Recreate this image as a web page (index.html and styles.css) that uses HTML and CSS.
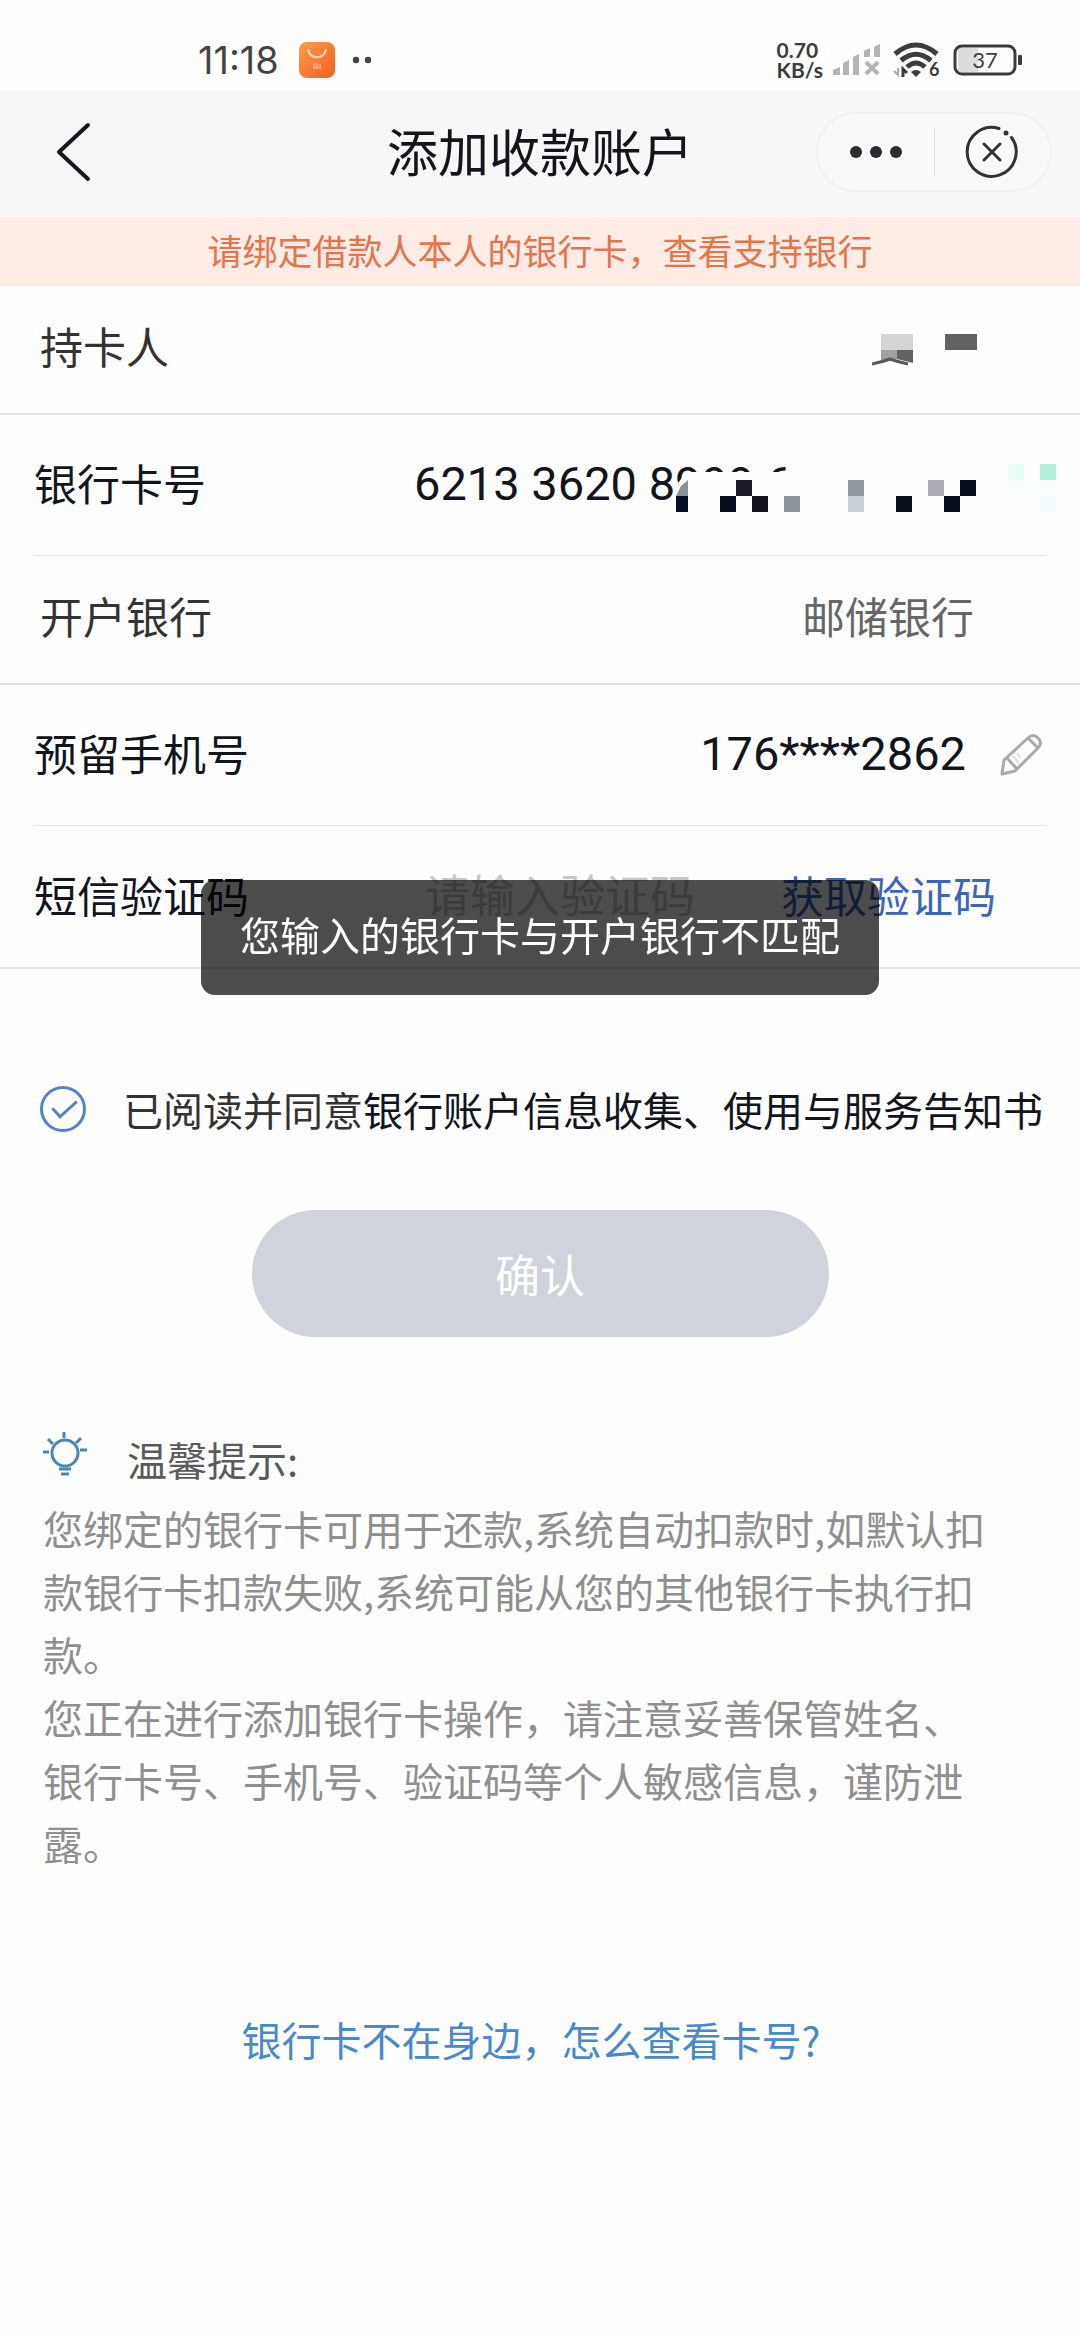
FILE: index.html
```
<!DOCTYPE html>
<html lang="zh-CN">
<head>
  <meta charset="UTF-8" />
  <meta name="viewport" content="width=device-width, initial-scale=1" />
  <title>添加收款账户</title>
  <link rel="stylesheet" href="styles.css">
</head>
<body>
  <div class="status-bar">
    <span class="clock">11:18</span>
    <svg class="app-icon" width="36" height="36" viewBox="0 0 36 36">
      <defs>
        <linearGradient id="mi" x1="0" y1="0" x2="1" y2="1">
          <stop offset="0" stop-color="#f6a04a" />
          <stop offset="1" stop-color="#fb5a22" />
        </linearGradient>
      </defs>
      <rect width="36" height="36" rx="8" fill="url(#mi)" />
      <path d="M9 7c1 11 17 11 18 0" fill="none" stroke="#ffe3b8" stroke-width="2" />
      <path d="M15 27v-5h3.500v5M16.800 24v3M21 22v5" fill="none" stroke="#ffc9a0" stroke-width="1.200" />
    </svg>
    <svg class="more-dots" width="20" height="8" viewBox="0 0 20 8" fill="#444">
      <circle cx="4" cy="4" r="3.200" />
      <circle cx="16" cy="4" r="3.200" />
    </svg>
    <div class="net-speed"><span>0.70</span><span>KB/s</span></div>
    <svg class="signal" width="48" height="32" viewBox="0 0 48 32" fill="#b4b4b4">
      <path d="M0 31v-4q0-2 2-2l5-2v8zM10 31V20q0-2 2-2l4-2v15zM20 31V14q0-2 2-2l4-2v21zM31 13V8q0-2 2-2l4-2v9zM41 13V4q0-2 2-2l4-2v13z" />
      <path d="M33 18l12 12M45 18L33 30" stroke="#b4b4b4" stroke-width="4" />
    </svg>
    <svg class="wifi" width="48" height="38" viewBox="0 0 48 38">
      <g fill="none" stroke="#3c3c3c" stroke-width="5">
        <path d="M2 13Q23 -5 44 13" />
        <path d="M8 19.500Q23 7 38 19.500" />
        <path d="M14 26Q23 18 32 26" />
      </g>
      <path d="M18 31q5-4 10 0l-5 5z" fill="#3c3c3c" />
      <path d="M5 27v7l-4-4" fill="none" stroke="#aaa" stroke-width="2" />
      <path d="M10 36v-8l4 4" fill="none" stroke="#3c3c3c" stroke-width="3" />
      <text x="36" y="35" class="wifi-gen">6</text>
    </svg>
    <svg class="battery" width="70" height="32" viewBox="0 0 70 32">
      <rect x="5" y="4" width="20" height="24" fill="#dcdcdc" />
      <rect x="2" y="2" width="60" height="28" rx="7" fill="none" stroke="#3c3c3c" stroke-width="3" />
      <rect x="65" y="11" width="4" height="10" rx="1" fill="#3c3c3c" />
      <text x="32" y="24" class="battery-level">37</text>
    </svg>
  </div>

  <header class="header">
    <button class="back" type="button" aria-label="返回">
      <svg width="36" height="60" viewBox="0 0 36 60">
        <path d="M33 3L4 30l29 27" fill="none" stroke="#15171f" stroke-width="4" stroke-linecap="round" stroke-linejoin="round" />
      </svg>
    </button>
    <h1>添加收款账户</h1>
    <div class="capsule">
      <button type="button" aria-label="更多">
        <svg width="54" height="14" viewBox="0 0 54 14" fill="#2c2c30">
          <circle cx="7" cy="7" r="6" />
          <circle cx="27" cy="7" r="6" />
          <circle cx="47" cy="7" r="6" />
        </svg>
      </button>
      <button type="button" aria-label="关闭">
        <svg width="54" height="54" viewBox="0 0 54 54" fill="none" stroke="#333" stroke-width="3" stroke-linecap="round">
          <path d="M34 3.500A24.500 24.500 0 1 0 46.500 12.500" />
          <path d="M19 19l16 16M35 19L19 35" />
          <circle cx="41" cy="8" r="2.500" fill="#333" stroke="none" />
        </svg>
      </button>
    </div>
  </header>

  <div class="notice">请绑定借款人本人的银行卡，查看支持银行</div>

  <form class="form">
    <div class="row row-info">
      <span class="label">持卡人</span>
      <svg class="mask-name" width="106" height="32" viewBox="0 0 106 32">
        <path d="M9 0h32v16H9z" fill="#d5d5d5" />
        <path d="M9 16h16v9l-16 4z" fill="#a0a0a0" />
        <path d="M25 16h16v13l-16-4z" fill="#626262" />
        <path d="M0 30q10-2 18-5 8 3 18 5" fill="none" stroke="#5a5a5a" stroke-width="3" />
        <path d="M73 0h32v16H73z" fill="#626262" />
      </svg>
    </div>

    <div class="row row-input">
      <label class="label" for="cardNo">银行卡号</label>
      <input class="card-no" id="cardNo" type="text" value="6213 3620 8999 6">
      <!-- 卡号打码 -->
      <svg class="mask-card" width="408" height="56" viewBox="0 0 408 56">
        <path d="M28 30l10-14h140v40H28z" fill="#fefefe" />
        <path d="M40 24v16H28l5-10z" fill="#8b9095" />
        <path d="M28 40h12v16H28z" fill="#051022" />
        <path d="M88 24h16v16H88z" fill="#1b1a26" />
        <path d="M72 40h16v16H72z" fill="#051022" />
        <path d="M104 40h16v16h-16z" fill="#12131d" />
        <path d="M136 40h16v16h-16z" fill="#8d959c" />
        <path d="M200 24h16v16h-16z" fill="#92999f" />
        <path d="M200 40h16v16h-16z" fill="#c8ced6" />
        <path d="M248 40h16v16h-16z" fill="#08131c" />
        <path d="M280 24h16v16h-16z" fill="#aca9b5" />
        <path d="M312 24h16v16h-16zM296 40h16v16h-16z" fill="#06111d" />
        <path d="M360 8h16v16h-16z" fill="#e6fff6" />
        <path d="M392 8h16v16h-16z" fill="#b4efdd" />
        <path d="M360 24h48v16h-48z" fill="#fbfffc" />
        <path d="M392 40h16v16h-16z" fill="#f2fdfe" />
      </svg>
    </div>

    <div class="row row-info">
      <span class="label">开户银行</span>
      <span class="bank">邮储银行</span>
    </div>

    <div class="row row-input">
      <label class="label" for="phone">预留手机号</label>
      <input class="phone" id="phone" type="text" value="176****2862">
      <svg class="pencil" width="42" height="42" viewBox="0 0 42 42" fill="none" stroke="#aaa" stroke-width="3" stroke-linejoin="round">
        <path d="M2 40l2-14L28 4q5-5 10 0t0 10L15 37z" />
        <path d="M7 24l10 11M28 4l10 10" />
        <path d="M13 22l6 7M17 19l4 5" stroke="#dcdcf2" stroke-width="2" />
      </svg>
    </div>

    <div class="row row-input row-last">
      <label class="label" for="smsCode">短信验证码</label>
      <input class="sms-code" id="smsCode" type="text" placeholder="请输入验证码">
      <button class="get-code" type="button">获取验证码</button>
    </div>

    <div class="agree">
      <input type="checkbox" id="agree" checked>
      <label for="agree">已阅读并同意<a href="#">银行账户信息收集、使用与服务告知书</a></label>
    </div>

    <button class="submit" type="submit" disabled>确认</button>
  </form>

  <section class="tips">
    <h2>
      <svg width="44" height="44" viewBox="0 0 44 44" fill="none" stroke="#4687b5" stroke-width="3">
        <circle cx="22" cy="21" r="13" />
        <path d="M21 0v6M5 7l5 5M38 6l-5 5M0 20h6M37 18h7M16 37h12M18 42h8" />
      </svg>
      温馨提示:
    </h2>
    <p>您绑定的银行卡可用于还款,系统自动扣款时,如默认扣款银行卡扣款失败,系统可能从您的其他银行卡执行扣款。</p>
    <p>您正在进行添加银行卡操作，请注意妥善保管姓名、银行卡号、手机号、验证码等个人敏感信息，谨防泄露。</p>
  </section>

  <a class="help" href="#">银行卡不在身边，怎么查看卡号?</a>

  <div class="toast">您输入的银行卡与开户银行不匹配</div>
</body>
</html>
```
FILE: styles.css
```
* {
    margin: 0;
    padding: 0;
    box-sizing: border-box;
}

body {
    font-family: "Noto Sans CJK SC", sans-serif;
    background: #fefefe;
    color: #12151c;
    font-size: 40px;
}

button, input {
    font-family: inherit;
    border: none;
    background: none;
    color: inherit;
}

a {
    color: inherit;
    text-decoration: none;
}

svg {
    display: block;
    flex: none;
}

/* 状态栏 */
.status-bar {
    display: flex;
    align-items: center;
    height: 91px;
    padding: 28px 57px 0 198px;
}

.clock {
    font-family: Inter, sans-serif;
    font-size: 38px;
    color: #444;
}

.app-icon {
    margin-left: 20px;
}

.more-dots {
    margin-left: 17px;
}

.net-speed {
    display: flex;
    flex-direction: column;
    margin-left: auto;
    font-family: Lato, sans-serif;
    font-size: 21px;
    font-weight: bold;
    line-height: 20px;
    color: #3c3c3c;
}

.signal {
    margin-left: 10px;
}

.wifi {
    margin-left: 12px;
}

.wifi-gen {
    font: bold 18px Lato, sans-serif;
    fill: #3c3c3c;
}

.battery {
    margin-left: 12px;
}

.battery-level {
    font: 22px Lato, sans-serif;
    fill: #3c3c3c;
    text-anchor: middle;
}

/* 标题栏 */
.header {
    display: grid;
    grid-template-columns: 236px 1fr 236px;
    align-items: center;
    height: 126px;
    padding: 0 28px 4px;
    background: #f7f7f7;
}

.back {
    justify-self: start;
    padding-left: 27px;
}

h1 {
    padding-bottom: 4px;
    font-size: 51px;
    font-weight: normal;
    line-height: 72px;
    text-align: center;
}

.capsule {
    display: flex;
    height: 80px;
    border: 2px solid #f0f0f0;
    border-radius: 40px;
    background: #f9f9f9;
}

.capsule button {
    flex: 1;
    display: flex;
    align-items: center;
    justify-content: center;
}

.capsule button + button {
    position: relative;
}

.capsule button + button::before {
    content: "";
    position: absolute;
    left: 0;
    top: 14px;
    bottom: 14px;
    width: 1px;
    background: #ddd;
}

.notice {
    padding-bottom: 4px;
    background: #feece5;
    color: #e2754c;
    font-size: 35px;
    line-height: 65px;
    text-align: center;
}

/* 表单 */
.row {
    position: relative;
    display: flex;
    align-items: center;
}

.row-info {
    height: 129px;
    padding: 0 106px 10px 40px;
    border-bottom: 2px solid #e3e3e3;
    color: #333;
}

.row-input {
    height: 141px;
    padding: 0 34px 8px;
}

.row-input:not(.row-last)::after {
    content: "";
    position: absolute;
    left: 34px;
    right: 34px;
    bottom: 0;
    height: 1px;
    background: #e6e6e6;
}

.row-last {
    height: 143px;
    padding-bottom: 6px;
    border-bottom: 2px solid #e3e3e3;
}

.label {
    width: 380px;
    font-size: 43px;
    line-height: 64px;
}

.row-info .label {
    flex: 1;
}

.mask-name {
    margin: 10px -4px 0 0;
}

.bank {
    font-size: 43px;
    line-height: 64px;
    color: #666;
}

.card-no, .phone {
    flex: 1;
    min-width: 0;
    padding-top: 4px;
    font-family: Roboto, sans-serif;
    font-size: 47px;
}

.phone {
    text-align: right;
}

.pencil {
    margin: 6px 4px 0 34px;
}

.mask-card {
    position: absolute;
    top: 41px;
    right: 24px;
}

.sms-code {
    flex: none;
    width: 292px;
    font-size: 45px;
    text-align: center;
}

.sms-code::placeholder {
    color: #c6c6c6;
}

.get-code {
    margin-left: auto;
    padding-right: 50px;
    font-size: 43px;
    color: #3b66c0;
}

.agree {
    display: flex;
    align-items: center;
    margin-top: 110px;
    padding-left: 40px;
    line-height: 60px;
    color: #333;
    white-space: nowrap;
}

.agree input {
    appearance: none;
    flex: none;
    position: relative;
    width: 46px;
    height: 46px;
    margin-right: 37px;
    border: 3px solid #5581cc;
    border-radius: 50%;
}

.agree input:checked::after {
    content: "";
    position: absolute;
    left: 15px;
    top: 5px;
    width: 10px;
    height: 21px;
    border: solid #5581cc;
    border-width: 0 3px 3px 0;
    transform: rotate(48deg);
}

.agree a {
    color: #12151c;
}

.submit {
    display: block;
    width: 577px;
    max-width: 90%;
    margin: 71px auto 0;
    border-radius: 64px;
    background: #cfd3dc;
    color: #fff;
    font-size: 45px;
    line-height: 127px;
}

/* 温馨提示 */
.tips {
    margin-top: 91px;
    padding: 0 84px 0 43px;
    color: #8f8f8f;
    line-height: 63px;
}

.tips h2 {
    display: flex;
    align-items: flex-start;
    gap: 40px;
    margin-bottom: 6px;
    font-size: 40px;
    font-weight: normal;
    color: #5a5a5a;
}

.tips h2 svg {
    margin-top: 4px;
}

.help {
    display: block;
    margin-top: 134px;
    padding-right: 18px;
    line-height: 60px;
    text-align: center;
    color: #4a88cc;
}

.toast {
    position: fixed;
    top: 880px;
    left: 50%;
    transform: translateX(-50%);
    padding: 24px 39px 31px;
    border-radius: 14px;
    background: rgba(0, 0, 0, 0.7);
    color: #fff;
    line-height: 60px;
    white-space: nowrap;
}
```
